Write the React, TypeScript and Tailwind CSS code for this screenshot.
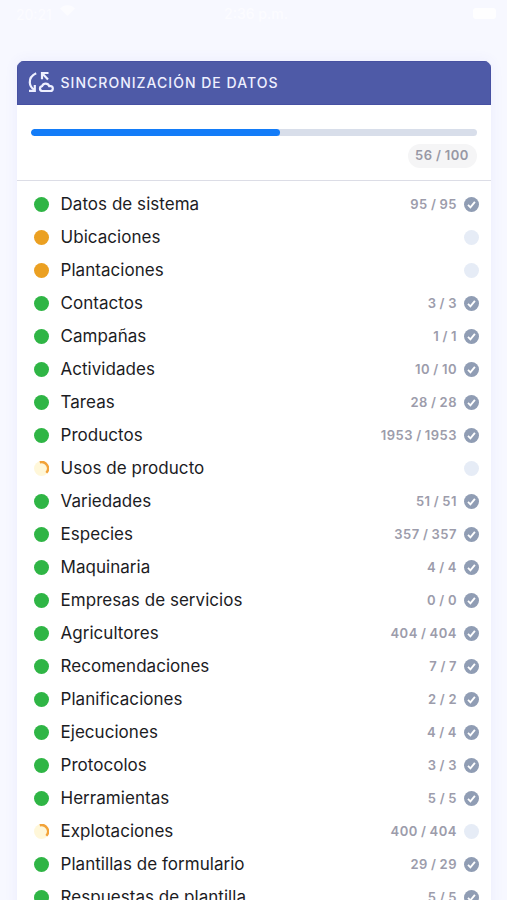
type Status = "done" | "pending" | "loading";

interface SyncItem {
  label: string;
  status: Status;
  count?: string;
  checked?: boolean;
}

const items: SyncItem[] = [
  { label: "Datos de sistema", status: "done", count: "95 / 95", checked: true },
  { label: "Ubicaciones", status: "pending" },
  { label: "Plantaciones", status: "pending" },
  { label: "Contactos", status: "done", count: "3 / 3", checked: true },
  { label: "Campañas", status: "done", count: "1 / 1", checked: true },
  { label: "Actividades", status: "done", count: "10 / 10", checked: true },
  { label: "Tareas", status: "done", count: "28 / 28", checked: true },
  { label: "Productos", status: "done", count: "1953 / 1953", checked: true },
  { label: "Usos de producto", status: "loading" },
  { label: "Variedades", status: "done", count: "51 / 51", checked: true },
  { label: "Especies", status: "done", count: "357 / 357", checked: true },
  { label: "Maquinaria", status: "done", count: "4 / 4", checked: true },
  { label: "Empresas de servicios", status: "done", count: "0 / 0", checked: true },
  { label: "Agricultores", status: "done", count: "404 / 404", checked: true },
  { label: "Recomendaciones", status: "done", count: "7 / 7", checked: true },
  { label: "Planificaciones", status: "done", count: "2 / 2", checked: true },
  { label: "Ejecuciones", status: "done", count: "4 / 4", checked: true },
  { label: "Protocolos", status: "done", count: "3 / 3", checked: true },
  { label: "Herramientas", status: "done", count: "5 / 5", checked: true },
  { label: "Explotaciones", status: "loading", count: "400 / 404" },
  { label: "Plantillas de formulario", status: "done", count: "29 / 29", checked: true },
  { label: "Respuestas de plantilla", status: "done", count: "5 / 5", checked: true },
];

function SyncIcon() {
  return (
    <svg className="w-[26px] h-[22px] text-[#eef0ff]" viewBox="0 0 26 22" fill="none" stroke="currentColor" strokeWidth={2.2}>
      <path d="M8.2 2.2C4.200 4 1.600 7.400 1.800 11.500c.1 2.800 1.700 5.300 4.200 7.200" />
      <path d="M1 19.900h5.800v-5.800" />
      <path d="M20.500 2h-6.500v6.200M14.400 2.400l5.600 6" />
      <path d="M13.900 20h8.400a2.400 2.400 0 0 0 .2-4.800h-1.300a3.800 3.800 0 0 0-7.100-.1 2.500 2.500 0 0 0-.2 4.900Z" />
    </svg>
  );
}

function StatusDot({ status }: { status: Status }) {
  if (status === "loading") {
    return (
      <svg className="w-[15px] h-[15px] shrink-0" viewBox="0 0 15 15" fill="none">
        <circle cx="7.5" cy="7.5" r="7.5" fill="#fff7d9" />
        <path d="M5.800 1.300A6.400 6.400 0 0 1 12.300 11.800" stroke="#f2a33a" strokeWidth={2.4} />
      </svg>
    );
  }
  return (
    <span
      className={`w-[15px] h-[15px] shrink-0 rounded-full ${
        status === "done" ? "bg-[#2fb545]" : "bg-[#eba022]"
      }`}
    />
  );
}

function CheckMark({ checked }: { checked?: boolean }) {
  return (
    <svg className="w-[15px] h-[15px] shrink-0" viewBox="0 0 15 15" fill="none">
      <circle cx="7.5" cy="7.5" r="7.5" fill={checked ? "#909db4" : "#e6ecf6"} />
      {checked && <path d="M4 7.900l2.400 2.400 4.500-5.500" stroke="white" strokeWidth={1.9} />}
    </svg>
  );
}

export default function App() {
  return (
    <div className="h-[900px] w-[507px] overflow-hidden bg-[#f7f8ff] font-['Inter',sans-serif]">
      {/* Status bar */}
      <div className="flex h-[61px] items-start justify-between pt-[5px] pl-[16px] pr-[11px] text-[14px] leading-[18px] text-[#fcfcff]">
        <div className="flex w-[180px] items-center gap-2">
          <span>20:21</span>
          <svg className="mb-2 w-[15px] h-[11px]" viewBox="0 0 15 11" fill="currentColor">
            <path d="M0 3.5C4.500-.8 10.500-.8 15 3.500L7.500 11Z" />
          </svg>
        </div>
        <span className="font-medium">2:36 p.m.</span>
        <div className="flex w-[180px] justify-end pt-[3px]">
          <span className="h-[11px] w-[23px] rounded-[3px] bg-[#fefeff]" />
        </div>
      </div>

      {/* Sync card */}
      <div className="mx-auto w-[474px] overflow-hidden rounded-[7px] bg-white shadow-[0_0_14px_rgba(90,80,220,0.07)]">
        <div className="flex h-[44px] items-center gap-[7px] border border-[#4751a2] bg-[#4e5aa7] pb-[2px] pl-[10px]">
          <SyncIcon />
          <h1 className="text-[14px] font-medium tracking-[1.02px] text-[#eef0ff]">SINCRONIZACIÓN DE DATOS</h1>
        </div>

        {/* Overall progress */}
        <div className="flex h-[76px] flex-col items-end border-b border-[#dcdde6] px-[14px] pt-[24px]">
          <div className="h-[7px] w-full overflow-hidden rounded-full bg-[#d8deea]">
            <div className="h-full w-[56%] rounded-full bg-[#137cf8]" />
          </div>
          <span className="mt-[8px] flex h-[24px] w-[69px] items-center justify-center rounded-full bg-[#f5f5f6] text-[13px] font-semibold tracking-[0.5px] [word-spacing:-0.4px] text-[#9898a5]">
            56 / 100
          </span>
        </div>

        <ul className="pt-[7px]">
          {items.map((item) => (
            <li key={item.label} className="flex h-[33px] items-center pl-[17px] pr-[12px]">
              <StatusDot status={item.status} />
              <span className="ml-[12px] flex-1 text-[17px] tracking-[0.04px] text-[#1c1c1f]">{item.label}</span>
              <span className="mr-[6.5px] text-[13px] font-semibold tracking-[0.5px] [word-spacing:-0.6px] text-[#9c9cab]">
                {item.count}
              </span>
              <CheckMark checked={item.checked} />
            </li>
          ))}
        </ul>
      </div>
    </div>
  );
}
